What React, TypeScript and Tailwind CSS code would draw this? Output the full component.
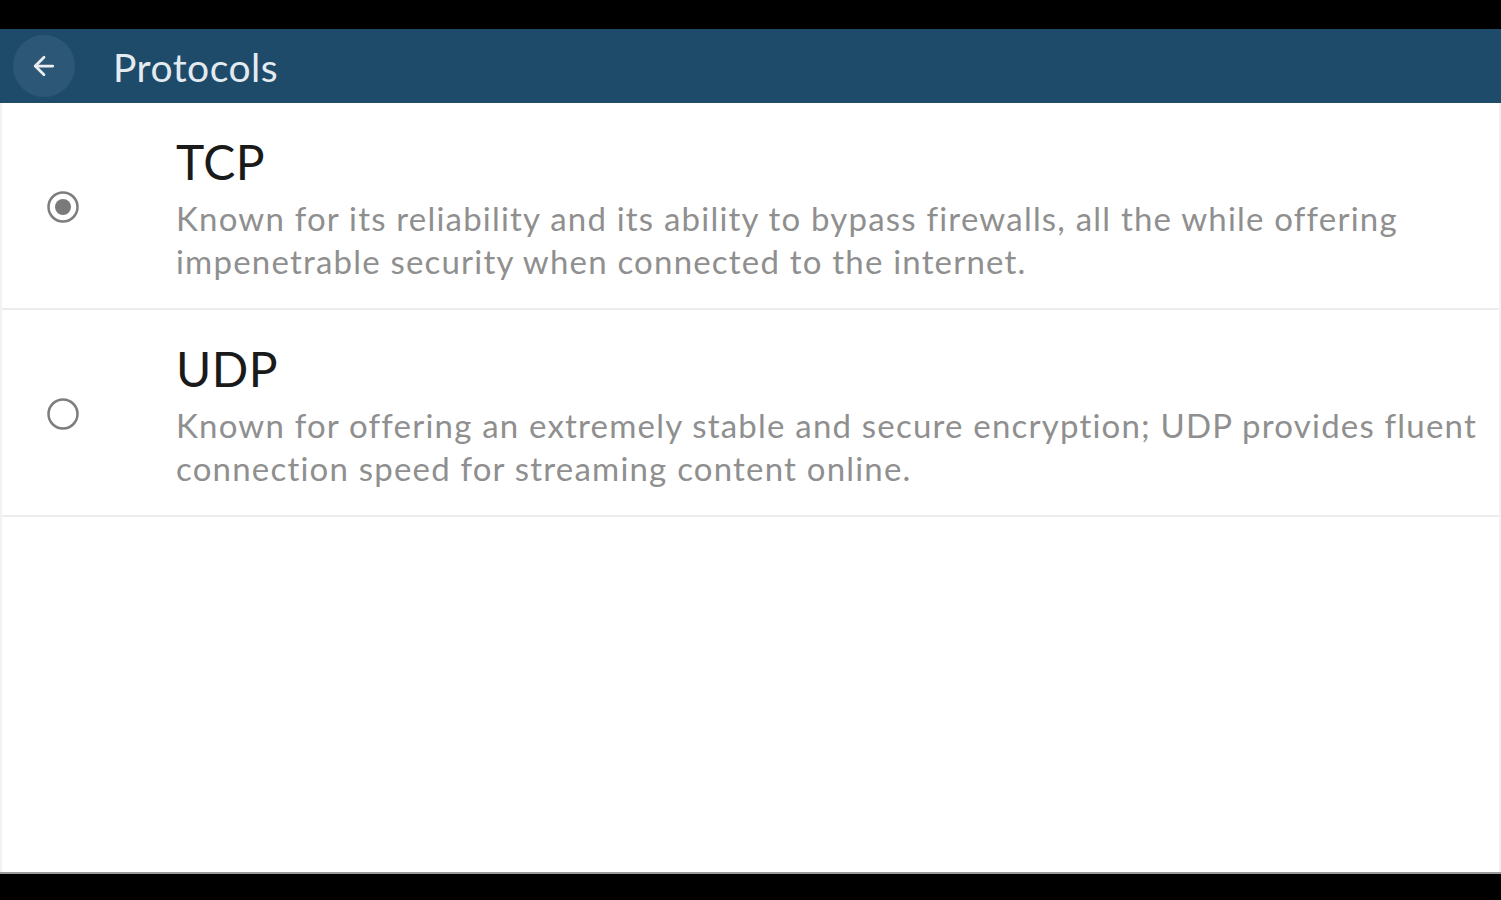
import React from "react";

const font = { fontFamily: "Lato, 'Noto Sans', sans-serif" };

function Radio({ checked }: { checked: boolean }) {
  return (
    <svg width="34" height="34" viewBox="0 0 34 34">
      <circle cx="17" cy="17" r="14.5" fill="none" stroke="#7d7d7d" strokeWidth="2.5" />
      {checked && <circle cx="17" cy="17" r="8" fill="#7a7a7a" />}
    </svg>
  );
}

function Row({ title, lines, checked }: { title: string; lines: string[]; checked: boolean }) {
  return (
    <div className="flex items-center border-b-2 border-[#ececec] pt-[31px] pb-[24px]">
      <div className="w-[174px] shrink-0 flex justify-start pl-[44px] pb-[5px]">
        <Radio checked={checked} />
      </div>
      <div className="flex flex-col">
        <div className="text-[48px] leading-[56px] text-[#1a1a1a] tracking-[0.5px]" style={font}>
          {title}
        </div>
        <div className="mt-[7px] mb-[1px] text-[33px] leading-[43px] text-[#8f8f8f] whitespace-nowrap tracking-[1.2px]" style={font}>
          {lines.map((l, i) => (
            <div key={i}>{l}</div>
          ))}
        </div>
      </div>
    </div>
  );
}

export default function App() {
  return (
    <div className="w-full h-[900px] flex flex-col bg-black overflow-hidden">
      <div className="h-[29px] bg-black shrink-0" />
      <div className="h-[74px] shrink-0 bg-[#1f4b6b] flex items-center">
        <div className="ml-[13px] w-[62px] h-[62px] rounded-full bg-[#2c5776] flex items-center justify-center">
          <svg width="30" height="30" viewBox="0 0 24 24" fill="none" stroke="#e8eef2" strokeWidth="2.2" strokeLinecap="round" strokeLinejoin="round">
            <path d="M19 12H5" />
            <path d="M12 5l-7 7 7 7" />
          </svg>
        </div>
        <div className="ml-[38px] mt-[3px] text-[39px] text-[#e4ebf0] leading-none tracking-[0.5px]" style={font}>
          Protocols
        </div>
      </div>
      <div className="flex-1 bg-white border-x-2 border-[#f2f2f2]">
        <Row
          title="TCP"
          checked
          lines={[
            "Known for its reliability and its ability to bypass firewalls, all the while offering",
            "impenetrable security when connected to the internet.",
          ]}
        />
        <Row
          title="UDP"
          checked={false}
          lines={[
            "Known for offering an extremely stable and secure encryption; UDP provides fluent",
            "connection speed for streaming content online.",
          ]}
        />
      </div>
      <div className="h-[2px] bg-[#9a9a9a] shrink-0" />
      <div className="h-[26px] bg-black shrink-0" />
    </div>
  );
}
